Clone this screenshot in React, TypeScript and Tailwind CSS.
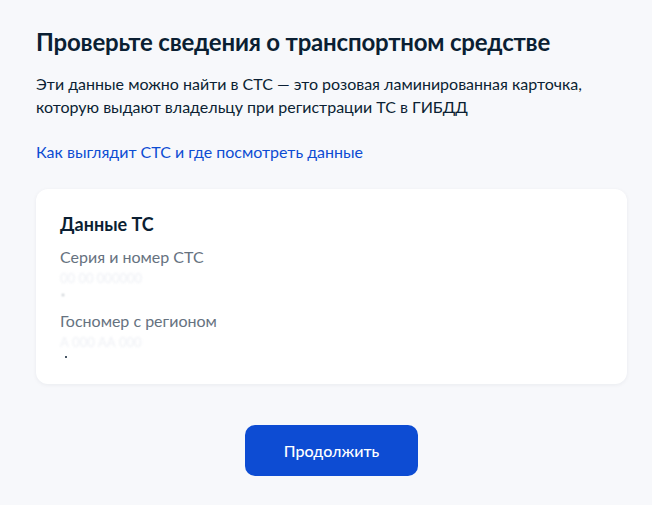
export default function App() {
  return (
    <div className="min-h-[505px] w-full bg-[#f7f8fb] font-['Lato','Noto_Sans',sans-serif] text-[#0b1f33]">
      <div className="px-9 pt-[26px]">
        <h1 className="text-[24px] font-bold leading-[32px] tracking-[-0.2px]">
          Проверьте сведения о транспортном средстве
        </h1>
        <p className="mt-[14px] text-[16px] leading-[23px] text-[#0b1f33]">
          Эти данные можно найти в СТС — это розовая ламинированная карточка,
          <br />
          которую выдают владельцу при регистрации ТС в ГИБДД
        </p>
        <a className="mt-[22px] block text-[16px] leading-[24px] text-[#0d4cd3]">
          Как выглядит СТС и где посмотреть данные
        </a>

        <section className="mt-[25px] w-[591px] rounded-[12px] bg-white px-6 pb-[15px] pt-[22px] shadow-[0_1px_4px_rgba(11,31,51,0.06)]">
          <h2 className="text-[18px] font-bold leading-[26px]">Данные ТС</h2>
          <dl className="mt-[8px]">
            <dt className="text-[16px] leading-[24px] text-[#66727f]">Серия и номер СТС</dt>
            <dd className="text-[13px] leading-[18px] text-[#eef0f5] blur-[1px]">
              <div>00 00 000000</div>
              <div className="relative">
                <span className="absolute left-[2px] top-[7px] h-[2px] w-[2px] rounded-full bg-[#9aa3ad]" />
                &nbsp;
              </div>
            </dd>
            <dt className="mt-[4px] text-[16px] leading-[24px] text-[#66727f]">Госномер с регионом</dt>
            <dd className="text-[13px] leading-[18px] text-[#eef0f5]">
              <div className="blur-[1px]">А 000 АА 000</div>
              <div className="relative">
                <span className="absolute left-[5px] top-[5px] h-[2px] w-[2px] rounded-full bg-[#0b1f33]" />
                &nbsp;
              </div>
            </dd>
          </dl>
        </section>

        <div className="mt-[41px] flex justify-center pl-[11px]">
          <button className="h-[51px] w-[173px] rounded-[10px] bg-[#0d4cd3] text-[16px] font-medium text-white">
            Продолжить
          </button>
        </div>
      </div>
    </div>
  );
}
